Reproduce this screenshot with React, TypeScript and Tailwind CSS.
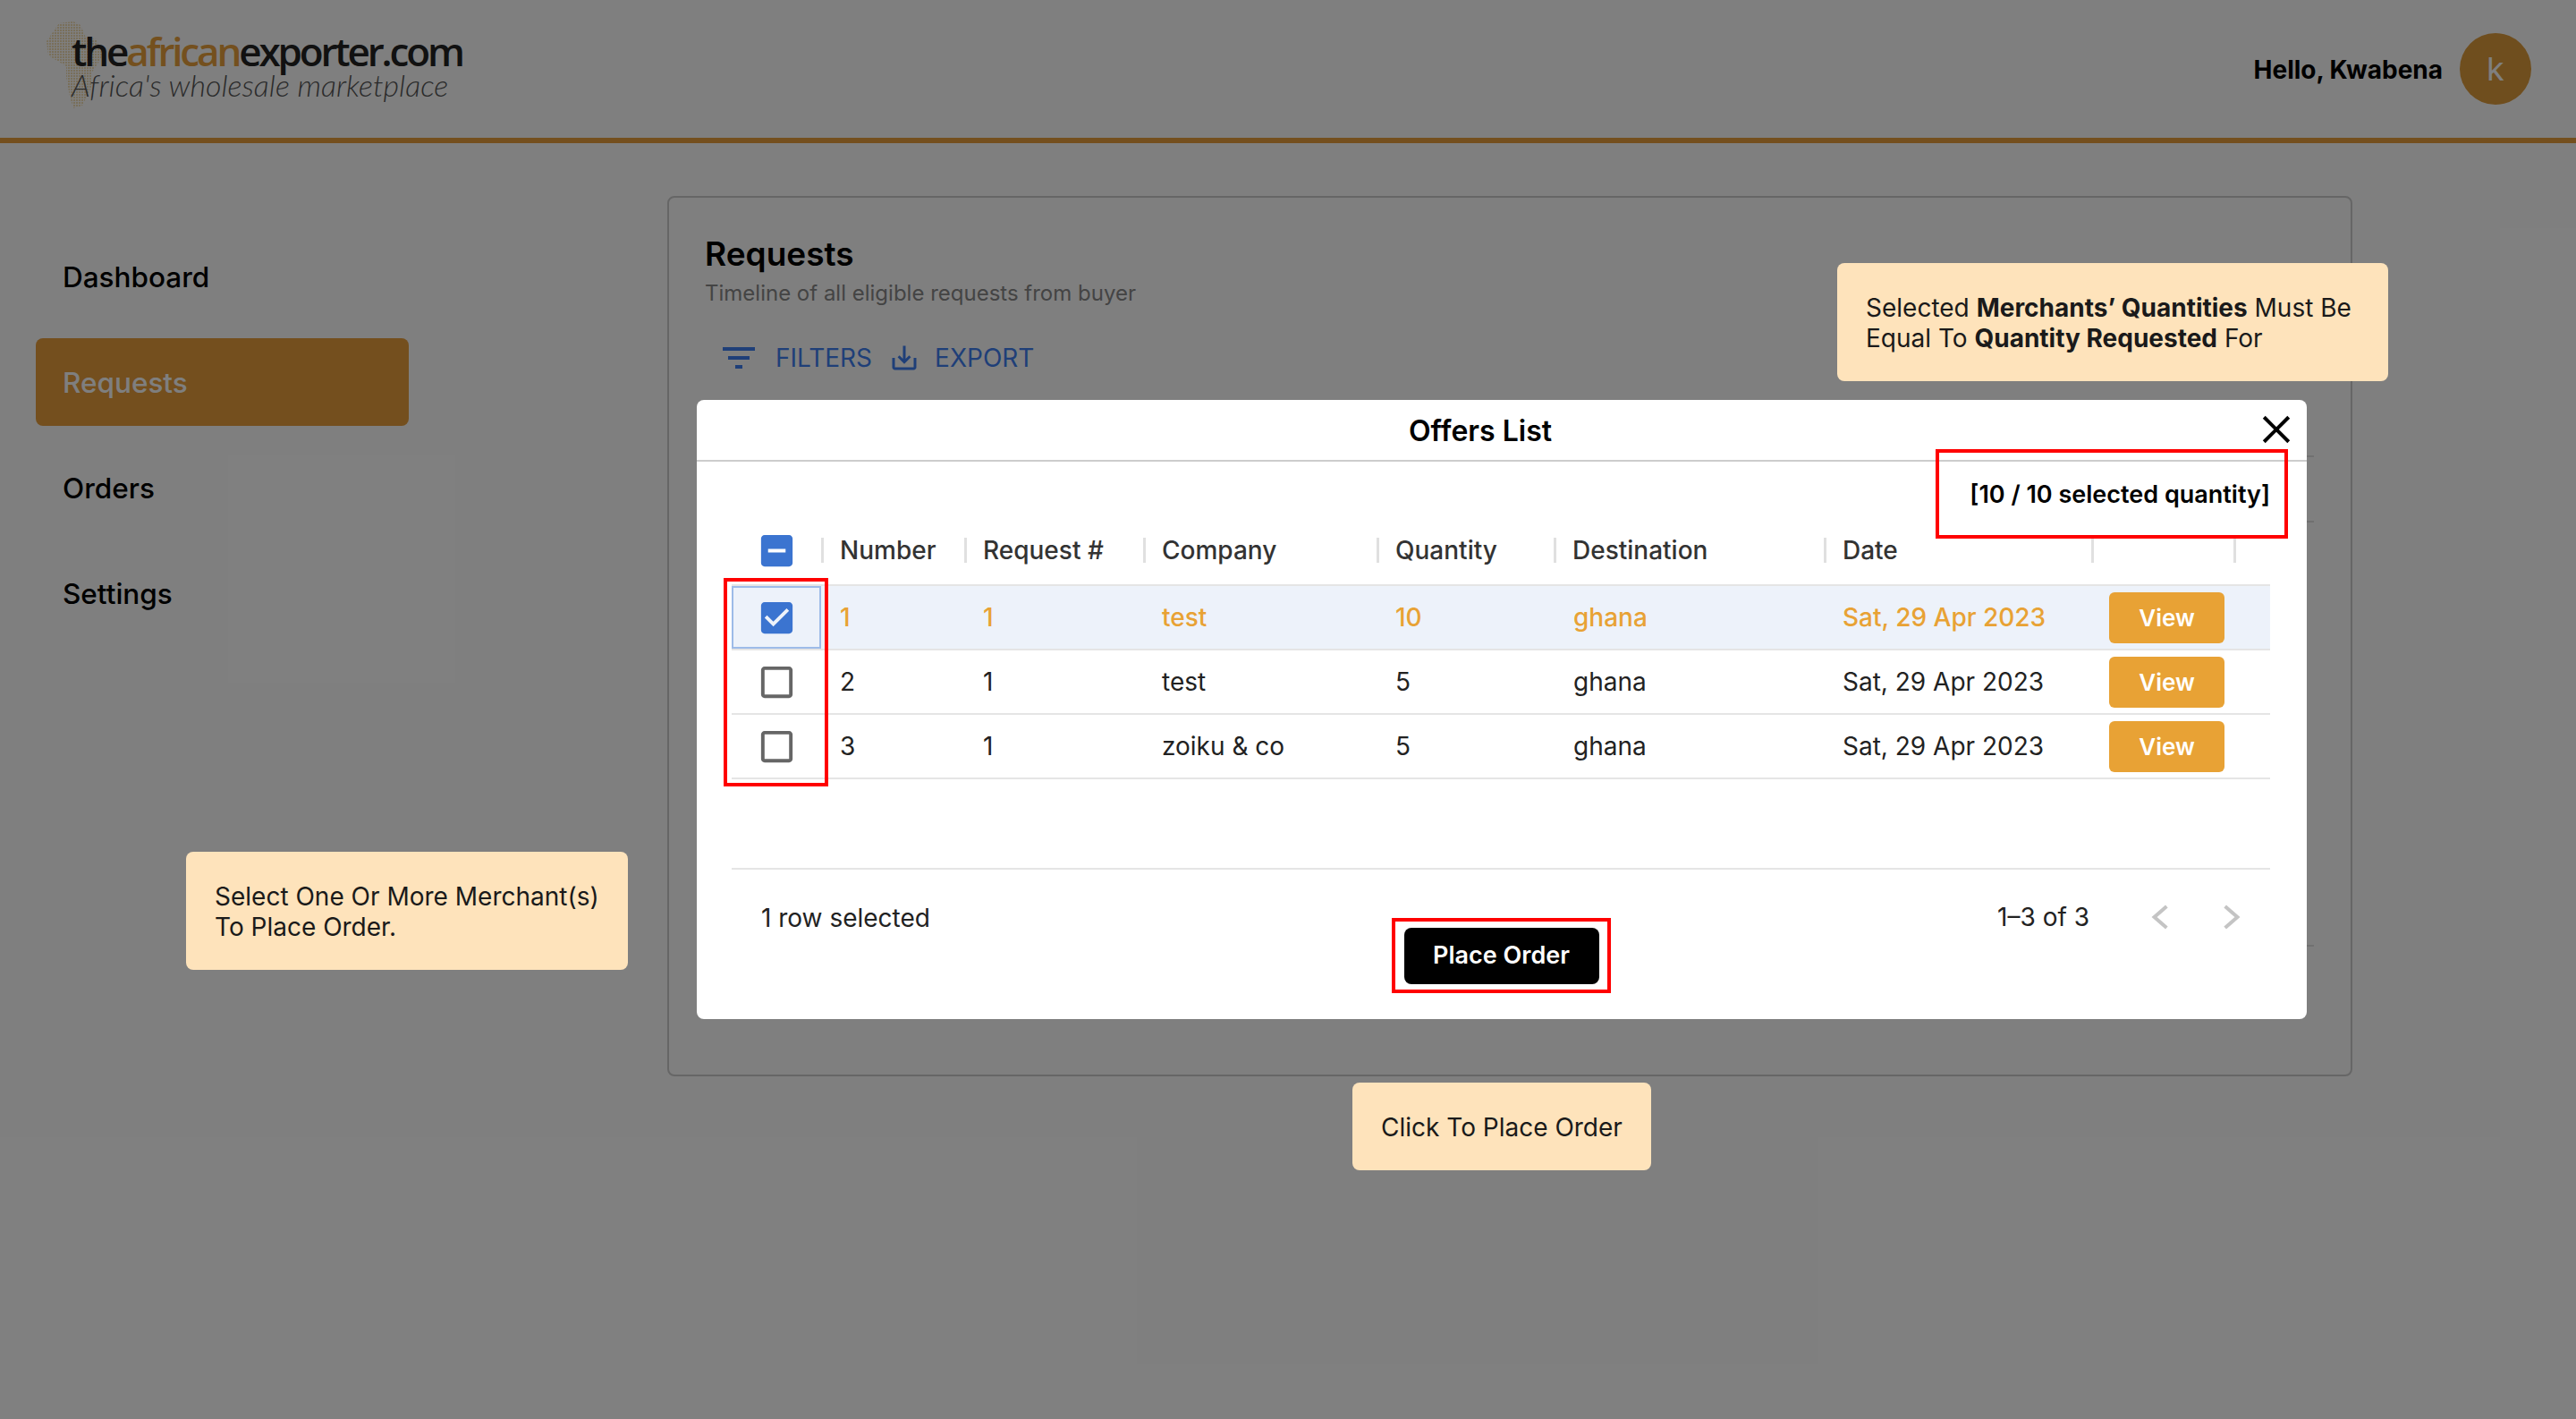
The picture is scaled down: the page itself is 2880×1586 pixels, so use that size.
import React from "react";

const navItems = ["Dashboard", "Requests", "Orders", "Settings"];

const columns = ["Number", "Request #", "Company", "Quantity", "Destination", "Date"];

const rows = [
  { number: "1", request: "1", company: "test", quantity: "10", destination: "ghana", date: "Sat, 29 Apr 2023", selected: true },
  { number: "2", request: "1", company: "test", quantity: "5", destination: "ghana", date: "Sat, 29 Apr 2023", selected: false },
  { number: "3", request: "1", company: "zoiku & co", quantity: "5", destination: "ghana", date: "Sat, 29 Apr 2023", selected: false },
];

const gridCols = "grid grid-cols-[100px_160px_200px_261px_198px_302px_299px_200px]";

const CheckIcon: React.FC<{ kind: "checked" | "empty" | "partial" }> = ({ kind }) => {
  const paths = {
    checked: "M19 3H5c-1.11 0-2 .9-2 2v14c0 1.1.89 2 2 2h14c1.11 0 2-.9 2-2V5c0-1.1-.89-2-2-2zm-9 14l-5-5 1.41-1.41L10 14.17l7.59-7.59L19 8l-9 9z",
    empty: "M19 5v14H5V5h14m0-2H5c-1.1 0-2 .9-2 2v14c0 1.1.9 2 2 2h14c1.1 0 2-.9 2-2V5c0-1.1-.9-2-2-2z",
    partial: "M19 3H5c-1.1 0-2 .9-2 2v14c0 1.1.9 2 2 2h14c1.1 0 2-.9 2-2V5c0-1.1-.9-2-2-2zm-2 10H7v-2h10v2z",
  };
  return (
    <svg width="47" height="47" viewBox="0 0 24 24" className={kind === "empty" ? "fill-[#666666]" : "fill-[#3b74d0]"}>
      <path d={paths[kind]} />
    </svg>
  );
};

const Logo: React.FC = () => (
  <div className="relative ml-[80px] mt-[29px] h-[84px] w-[440px] font-['Open_Sans',sans-serif]">
    <svg width="66" height="98" viewBox="0 0 66 98" className="absolute left-[-28px] top-[-5px]">
      <defs>
        <pattern id="dots" width="3" height="3" patternUnits="userSpaceOnUse">
          <rect width="2" height="2" fill="#f2dfb4" />
        </pattern>
      </defs>
      <path d="M14 2 L30 0 L38 4 L44 18 L56 20 L60 32 L66 32 L58 46 L50 58 L50 74 L40 94 L30 97 L26 84 L22 62 L22 50 L12 44 L2 38 L0 22 Z" fill="url(#dots)" />
    </svg>
    <div className="relative text-[44px] leading-[56px] font-semibold tracking-[-3.15px] text-[#222222] whitespace-nowrap">
      the<span className="text-[#e8a03c]">african</span>exporter.com
    </div>
    <div className="relative -mt-[8px] font-['Lato',sans-serif] text-[34px] leading-[36px] font-light italic text-[#555555] whitespace-nowrap">
      Africa's wholesale marketplace
    </div>
  </div>
);

const Callout: React.FC<{ className: string; children: React.ReactNode }> = ({ className, children }) => (
  <div className={`absolute z-30 flex items-center rounded-[8px] bg-[#fee3bb] px-[32px] pt-[2px] text-[28px] leading-[34px] text-[#1a1a1a] ${className}`}>
    <div>{children}</div>
  </div>
);

const App: React.FC = () => {
  return (
    <div className="relative h-[1586px] w-[2880px] overflow-hidden bg-white font-['Inter',sans-serif] text-black">
      <header className="flex h-[160px] items-start justify-between border-b-[6px] border-[#e89e3c]">
        <Logo />
        <div className="mr-[50px] mt-[37px] flex items-center gap-[19px]">
          <span className="pt-[2px] text-[28px] font-bold">Hello, Kwabena</span>
          <div className="flex h-[80px] w-[80px] items-center justify-center rounded-full bg-[#df9c3c] text-[36px] text-white">k</div>
        </div>
      </header>

      <main className="flex">
        <nav className="flex w-[746px] shrink-0 flex-col gap-[20px] pl-[40px] pt-[100px]">
          {navItems.map((item) => (
            <div
              key={item}
              className={`flex h-[98px] w-[417px] items-center rounded-[8px] pl-[30px] pt-[2px] text-[31.5px] font-medium ${item === "Requests" ? "bg-[#e89e3c] text-white" : "text-black"}`}
            >
              {item}
            </div>
          ))}
        </nav>

        <section className="relative mt-[59px] h-[984px] w-[1884px] rounded-[8px] border-2 border-[#cccccc] pl-[40px] pt-[40px]">
          <h1 className="text-[37px] leading-[46px] font-semibold">Requests</h1>
          <p className="mt-[3px] text-[24px] leading-[36px] text-[#888888]">Timeline of all eligible requests from buyer</p>
          <div className="mt-[30px] flex items-center text-[28px] leading-[36px] text-[#3e7ef0]">
            <svg width="48" height="48" viewBox="0 0 24 24" fill="currentColor" className="ml-[14px] mr-[17px]">
              <path d="M10 18h4v-2h-4v2zM3 6v2h18V6H3zm3 7h12v-2H6v2z" />
            </svg>
            <span>FILTERS</span>
            <svg width="36" height="36" viewBox="0 0 24 24" fill="currentColor" className="ml-[18px] mr-[16px]">
              <path d="M19 12v7H5v-7H3v7c0 1.1.9 2 2 2h14c1.1 0 2-.9 2-2v-7h-2zm-6 .67l2.59-2.58L17 11.5l-5 5-5-5 1.41-1.41L11 12.67V3h2z" />
            </svg>
            <span>EXPORT</span>
          </div>
          <div className="absolute left-[100px] right-[41px] top-[288px] h-[2px] bg-[#e0e0e0]" />
          <div className="absolute left-[100px] right-[41px] top-[361px] h-[2px] bg-[#e0e0e0]" />
          <div className="absolute left-[100px] right-[41px] top-[835px] h-[2px] bg-[#e0e0e0]" />
        </section>
      </main>

      {/* dim layer behind the dialog */}
      <div className="absolute inset-0 z-10 bg-black/50" />

      <div className="absolute left-[779px] top-[447px] z-20 h-[692px] w-[1800px] rounded-[8px] bg-white">
        <div className="relative flex h-[69px] items-center justify-center border-b-2 border-[#cccccc]">
          <span className="-ml-[48px] pt-[2px] text-[32px] font-semibold">Offers List</span>
          <svg width="44" height="44" viewBox="0 0 24 24" fill="none" stroke="black" strokeWidth="2.2" className="absolute right-[12px] top-[11px]">
            <path d="M4.5 4.5 L19.5 19.5 M19.5 4.5 L4.5 19.5" />
          </svg>
        </div>
        <div className="pr-[41px] pt-[19px] text-right text-[27px] leading-[36px] font-semibold">[10 / 10 selected quantity]</div>

        <div className="ml-[39px] mt-[12px] w-[1720px]">
          <div className={`${gridCols} h-[72px] items-center border-b-2 border-[#e5e5e5] pb-[6px] text-[28px] font-medium text-[#333333]`}>
            <div className="flex justify-center">
              <CheckIcon kind="partial" />
            </div>
            {columns.map((col) => (
              <div key={col} className="flex items-center gap-[18px]">
                <span className="h-[28px] w-[3px] bg-[#e0e0e0]" />
                <span>{col}</span>
              </div>
            ))}
            <div className="flex items-center justify-between pr-[38px]">
              <span className="h-[28px] w-[3px] bg-[#e0e0e0]" />
              <span className="h-[28px] w-[3px] bg-[#e0e0e0]" />
            </div>
          </div>

          {rows.map((row) => {
            const text = row.selected ? "font-medium text-[#e8a235]" : "text-[#222222]";
            return (
              <div key={row.number} className={`${gridCols} h-[72px] items-center border-b-2 border-[#e5e5e5] text-[28px] ${text} ${row.selected ? "bg-[#edf2fa]" : ""}`}>
                <div className={`flex h-full items-center justify-center ${row.selected ? "border-2 border-[#9dbbe8]" : ""}`}>
                  <CheckIcon kind={row.selected ? "checked" : "empty"} />
                </div>
                <div className="pl-[21px]">{row.number}</div>
                <div className="pl-[21px]">{row.request}</div>
                <div className="pl-[21px]">{row.company}</div>
                <div className="pl-[21px]">{row.quantity}</div>
                <div className="pl-[22px]">{row.destination}</div>
                <div className="pl-[21px]">{row.date}</div>
                <div className="pl-[20px]">
                  <button className="h-[57px] w-[129px] rounded-[6px] bg-[#e8a235] text-[26px] font-semibold text-white">View</button>
                </div>
              </div>
            );
          })}
        </div>

        <div className="ml-[39px] mt-[99px] flex w-[1720px] items-start justify-between border-t-2 border-[#e5e5e5] pt-[36px] text-[28px] leading-[36px] text-[#222222]">
          <span className="pl-[33px]">1 row selected</span>
          <div className="-mt-[5px] flex items-center">
            <span>1–3 of 3</span>
            <svg width="44" height="44" viewBox="0 0 24 24" fill="none" stroke="#c4c4c4" strokeWidth="2.2" className="ml-[57px]">
              <path d="M16 5.5 L8.5 12 L16 18.5" />
            </svg>
            <svg width="44" height="44" viewBox="0 0 24 24" fill="none" stroke="#c4c4c4" strokeWidth="2.2" className="ml-[36px] mr-[21px]">
              <path d="M8 5.5 L15.5 12 L8 18.5" />
            </svg>
          </div>
        </div>
        <div className="-mt-[10px] flex justify-center">
          <button className="ml-[-1px] h-[63px] w-[218px] rounded-[8px] bg-black text-[27px] font-semibold text-white">Place Order</button>
        </div>
      </div>

      <Callout className="left-[2054px] top-[294px] h-[132px] w-[616px]">
        Selected <b className="font-bold">Merchants’ Quantities</b> Must Be Equal To <b className="font-bold">Quantity Requested</b> For
      </Callout>
      <Callout className="left-[208px] top-[952px] h-[132px] w-[494px]">Select One Or More Merchant(s) To Place Order.</Callout>
      <Callout className="left-[1512px] top-[1210px] h-[98px] w-[334px] whitespace-nowrap">Click To Place Order</Callout>

      {/* red tutorial markers */}
      <div className="absolute left-[2164px] top-[502px] z-30 h-[100px] w-[394px] border-[4px] border-[#ff0000]" />
      <div className="absolute left-[809px] top-[646px] z-30 h-[233px] w-[117px] border-[4px] border-[#ff0000]" />
      <div className="absolute left-[1556px] top-[1026px] z-30 h-[84px] w-[245px] border-[4px] border-[#ff0000]" />
    </div>
  );
};

export default App;
